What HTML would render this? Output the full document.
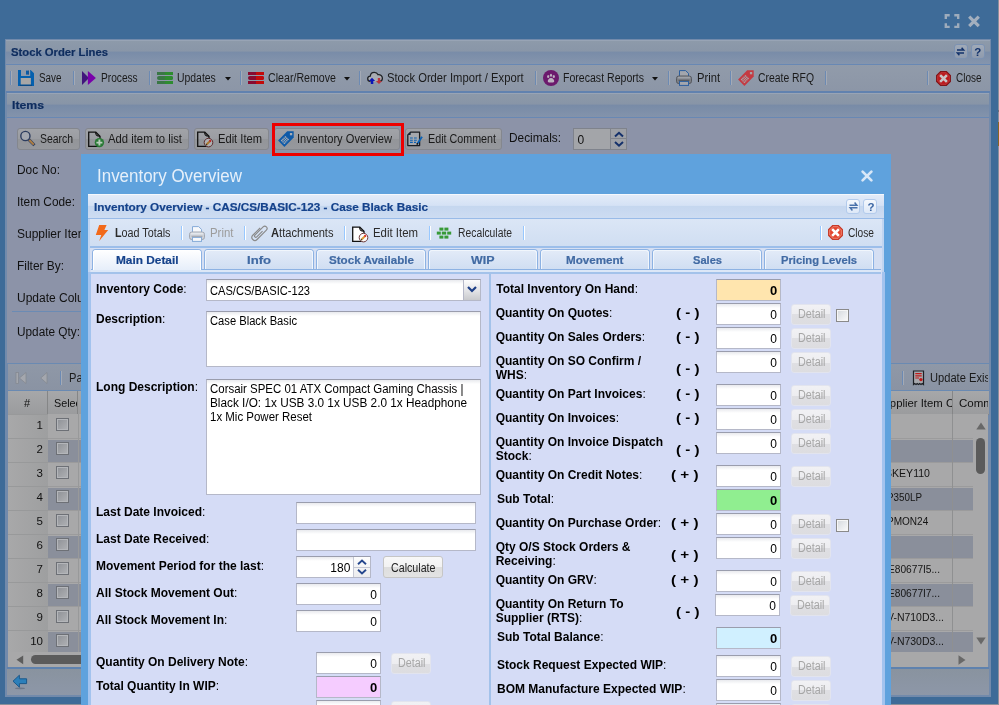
<!DOCTYPE html>
<html>
<head>
<meta charset="utf-8">
<title>Inventory Overview</title>
<style>
*{box-sizing:border-box;margin:0;padding:0}
html,body{width:999px;height:705px;overflow:hidden}
body{background:#3e6b98;font-family:"Liberation Sans",sans-serif;font-size:12px;color:#000;position:relative}
.a{position:absolute}
svg{position:absolute;overflow:visible}
.t{position:absolute;white-space:nowrap;line-height:14px}
.hv{-webkit-text-stroke:0.2px currentColor}
/* ---------- background (dimmed) window ---------- */
#win{left:5px;top:39px;width:986px;height:658px;background:#728aab}
#wtitle{left:1px;top:1px;width:984px;height:25px;background:linear-gradient(#8d9aaa,#8996a8 44%,#798ca8 48%,#8595ad);border-top:1px solid #98a4b5;border-bottom:1px solid #6888b4}
#wtb{left:1px;top:26px;width:984px;height:28px;background:linear-gradient(#919baa,#8c96a7);border-bottom:2px solid #6182af}
#items{left:2px;top:54px;width:982px;height:25px;background:linear-gradient(#8c99a9,#8895a7 44%,#788ba7 48%,#8393ab);border-top:1px solid #98a4b5;border-bottom:1px solid #6888b4}
#wbody{left:2px;top:79px;width:982px;height:246px;background:#8c93a8}
.sep{position:absolute;width:2px;height:14px;border-left:1px solid #6c8ab3;border-right:1px solid #a4aab5}
.dbtn{position:absolute;height:22px;border:1px solid #84878e;border-radius:3px;background:linear-gradient(#a1a3a8,#9b9da2 48%,#939599 52%,#96989d)}
/* grid */
.gh{position:absolute;top:391px;height:24px;background:linear-gradient(#a6a7a9,#9b9c9e);border-right:1px solid #858687;border-bottom:1px solid #858687}
.row{position:absolute;left:8px;width:965px;height:24px}
.row.o{background:#a6a7a9}
.row.e{background:#8a8f9c}
.num{position:absolute;left:0;top:0;width:40px;height:24px;background:linear-gradient(90deg,#a6a7a9,#9c9d9f);border-bottom:1px solid #98999b}
.cb{position:absolute;left:48px;top:5px;width:13px;height:13px;border:1px solid #6d7076;background:linear-gradient(135deg,#8e9196,#b0b2b5);box-shadow:inset 0 0 0 1px #b4b6ba}
.vl{position:absolute;top:0;width:1px;height:24px;background:#97989a}
/* ---------- modal ---------- */
#modal{left:81px;top:154px;width:810px;height:560px;background:#5fa2dd}
#panel{left:88px;top:194px;width:796px;height:520px;background:#d5dcf6;border:1px solid #a6c5ec;border-left:2px solid #c0d5f1;border-right:2px solid #c0d5f1}
#ptitle{left:88px;top:194px;border-top:1px solid #f4f8fd;width:796px;height:25px;background:linear-gradient(#e2ebf8,#d5e2f5 45%,#c5d7ef 50%,#cddcf2);border-bottom:1px solid #99bbe8}
#ptb{left:90px;top:219px;width:792px;height:29px;background:linear-gradient(#dbe6f6,#d0def2);border-bottom:2px solid #9cbeea}
#tabstrip{left:90px;top:248px;width:792px;height:26px;background:#d5dff3}
.msep{position:absolute;width:2px;height:14px;border-left:1px solid #98c8ff;border-right:1px solid #fff}
.tab{position:absolute;top:249px;height:20px;width:110px;border:1px solid #8db2e3;border-bottom:none;border-radius:4px 4px 0 0;background:linear-gradient(#e3ebf8,#d0def2)}
.tab.act{background:linear-gradient(#fff,#e6eefa);height:21px}
.inp{position:absolute;background:#fff;border:1px solid #b5b8c8;border-top-color:#9a9dad}
.btn{position:absolute;height:22px;border:1px solid #c6c6c6;border-radius:3px;background:linear-gradient(#f8f8f8,#f2f2f2 50%,#dedede 50%,#e3e3e3)}
.btn.dis{border-color:#e2e4ee;background:linear-gradient(#f1f1f4,#ededf0 50%,#dfdfe3 50%,#dddde0)}
.chk{position:absolute;width:13px;height:13px;border:1px solid #8a8a8a;background:linear-gradient(135deg,#d4d8dd,#fbfbfc);box-shadow:inset 0 0 0 1px #f6f6f6}
</style>
</head>
<body>
<div id="root" style="position:absolute;left:0;top:0;width:999px;height:705px;overflow:hidden;will-change:transform">
<svg style="left:944px;top:13px" width="40" height="16" viewBox="0 0 40 16">
<g fill="none" stroke="#9eacbc" stroke-width="2.4"><path d="M1.8 6V2.3h3.9M10.3 2.3h3.9V6M14.2 10.2v3.7h-3.9M5.7 13.9H1.8v-3.7"/></g>
<path d="M25.2 3.6l9.6 9.6M34.8 3.6l-9.6 9.6" stroke="#a3afbe" stroke-width="3.2" fill="none"/>
</svg>
<div id="win" class="a"><div id="wtitle" class="a"></div><div id="wtb" class="a"></div><div id="items" class="a"></div><div id="wbody" class="a"></div></div>
<div class="t hv" style="top:45.19px;font-size:11px;color:#0e2c5e;font-weight:bold;left:11px;transform:scaleX(1.0236);transform-origin:left;">Stock Order Lines</div>
<div class="t hv" style="top:98.19px;font-size:11px;color:#0e2c5e;font-weight:bold;left:12px;transform:scaleX(1.1130);transform-origin:left;">Items</div>
<div class="a" style="left:953.5px;top:44px;width:14px;height:14.5px;border:1px solid #7c92b2;border-radius:3px;background:linear-gradient(#a0aab8,#8f9bae)"></div>
<div class="a" style="left:970.5px;top:44px;width:14px;height:14.5px;border:1px solid #7c92b2;border-radius:3px;background:linear-gradient(#a0aab8,#8f9bae)"></div>
<svg style="left:955px;top:46px" width="11" height="11" viewBox="0 0 11 11"><g fill="none" stroke="#12326b" stroke-width="1.5"><path d="M2 4H8.6L6.6 1.8M9 7H2.4L4.4 9.2"/></g></svg>
<div class="t" style="top:44.52px;font-size:11.5px;color:#12326b;font-weight:bold;left:974.3px;">?</div>
<div class="sep" style="left:10px;top:71px"></div>
<div class="sep" style="left:73px;top:71px"></div>
<div class="sep" style="left:148.5px;top:71px"></div>
<div class="sep" style="left:239.5px;top:71px"></div>
<div class="sep" style="left:358.5px;top:71px"></div>
<div class="sep" style="left:534.5px;top:71px"></div>
<div class="sep" style="left:667.5px;top:71px"></div>
<div class="sep" style="left:729.5px;top:71px"></div>
<div class="sep" style="left:824.5px;top:71px"></div>
<div class="sep" style="left:926.5px;top:71px"></div>
<svg style="left:18px;top:70px" width="16" height="16" viewBox="0 0 16 16"><path d="M0 0H3V6H12.2V0H12.7L16 3.3V16H0Z" fill="#0560ae"/><rect x="8" y="0.6" width="2.6" height="4" fill="#0a5aa6"/><rect x="10" y="0.6" width="0.7" height="4" fill="#0a4a8a"/><rect x="2.7" y="8" width="10.2" height="6.7" fill="#a9a7a6"/><rect x="2" y="14.7" width="12" height="1.3" fill="#0b4a86"/></svg>
<div class="t" style="top:71.24px;font-size:12px;color:#1a1a1a;left:38.5px;transform:scaleX(0.8224);transform-origin:left;">Save</div>
<svg style="left:81px;top:70px" width="16" height="16" viewBox="0 0 16 16"><path d="M1 1L8 8L1 15Z" fill="#41157c"/><path d="M6.9 1L14.9 8L6.9 15Z" fill="#7900aa"/></svg>
<div class="t" style="top:71.24px;font-size:12px;color:#1a1a1a;left:101px;transform:scaleX(0.8464);transform-origin:left;">Process</div>
<svg style="left:157px;top:70px" width="16" height="16" viewBox="0 0 16 16"><rect x="0" y="2" width="8" height="3" fill="#3a7745"/><rect x="8" y="2" width="8" height="3" fill="#2e8c30"/><rect x="0" y="6" width="16" height="4" rx="2" fill="#3a7745"/><path d="M8 6h6a2 2 0 0 1 0 4H8z" fill="#2e8c30"/><rect x="0" y="11" width="8" height="3" fill="#3a7745"/><rect x="8" y="11" width="8" height="3" fill="#2e8c30"/></svg>
<div class="t" style="top:71.24px;font-size:12px;color:#1a1a1a;left:177px;transform:scaleX(0.8679);transform-origin:left;">Updates</div>
<svg style="left:224.5px;top:77px" width="6" height="4" viewBox="0 0 6 4"><path d="M0 0H6L3 3.5Z" fill="#111"/></svg>
<svg style="left:248px;top:70px" width="16" height="16" viewBox="0 0 16 16"><rect x="0" y="2" width="8" height="3" fill="#870a30"/><rect x="8" y="2" width="8" height="3" fill="#c20a0a"/><rect x="0" y="6" width="16" height="4" rx="2" fill="#870a30"/><path d="M8 6h6a2 2 0 0 1 0 4H8z" fill="#c20a0a"/><rect x="0" y="11" width="8" height="3" fill="#870a30"/><rect x="8" y="11" width="8" height="3" fill="#c20a0a"/></svg>
<div class="t" style="top:71.24px;font-size:12px;color:#1a1a1a;left:268px;transform:scaleX(0.8865);transform-origin:left;">Clear/Remove</div>
<svg style="left:343.5px;top:77px" width="6" height="4" viewBox="0 0 6 4"><path d="M0 0H6L3 3.5Z" fill="#111"/></svg>
<svg style="left:367px;top:70px" width="16" height="16" viewBox="0 0 16 16"><path d="M3.6 11.5C1.6 11.3 0.7 10 0.7 8.7C0.7 7.2 1.9 6.1 3.3 6.1C3.5 3.9 5.2 2.3 7.3 2.3C9 2.3 10.4 3.2 11.1 4.7C13.5 4.4 15.4 6 15.4 8.3C15.4 10.1 14.2 11.3 12.6 11.5" fill="#a9acb2" stroke="#1f2226" stroke-width="1.3"/><path d="M5 7.8L8.1 11H6.3V14H3.8V11H1.9Z" fill="#0b14b8"/><path d="M12 14.1L8.9 11H10.8V8H13.2V11H15.1Z" fill="#b9353d"/></svg>
<div class="t" style="top:71.24px;font-size:12px;color:#1a1a1a;left:387px;transform:scaleX(0.9346);transform-origin:left;">Stock Order Import / Export</div>
<svg style="left:543px;top:70px" width="16" height="16" viewBox="0 0 16 16"><circle cx="8" cy="8" r="8" fill="#6c1a6d"/><g fill="#bdb2c0"><ellipse cx="5.2" cy="6.4" rx="1.1" ry="1.5"/><ellipse cx="8" cy="5.2" rx="1.1" ry="1.5"/><ellipse cx="10.8" cy="6.4" rx="1.1" ry="1.5"/><path d="M8 8C10 8 11.4 10 11.2 11.4C11 12.6 9.6 12.4 8 12.4C6.4 12.4 5 12.6 4.8 11.4C4.6 10 6 8 8 8Z"/></g></svg>
<div class="t" style="top:71.24px;font-size:12px;color:#1a1a1a;left:563px;transform:scaleX(0.8800);transform-origin:left;">Forecast Reports</div>
<svg style="left:652px;top:77px" width="6" height="4" viewBox="0 0 6 4"><path d="M0 0H6L3 3.5Z" fill="#111"/></svg>
<svg style="left:676px;top:70px" width="16" height="16" viewBox="0 0 16 16"><path d="M3.5 7V0.6H9.6L12.5 3.4V7" fill="#a3a6ad" stroke="#2c5f9f" stroke-width="1"/><rect x="0.5" y="6" width="15" height="7.6" rx="2.4" fill="#7d8087" stroke="#55585e" stroke-width="1"/><rect x="1.6" y="6.8" width="12.8" height="1.8" rx="0.9" fill="#9ea1a8"/><rect x="3.5" y="11.4" width="9" height="4" fill="#a3a6ad" stroke="#2c5f9f" stroke-width="1"/><rect x="2.6" y="9.8" width="10.8" height="1.1" fill="#55585e"/></svg>
<div class="t" style="top:71.24px;font-size:12px;color:#1a1a1a;left:696.5px;transform:scaleX(0.9316);transform-origin:left;">Print</div>
<svg style="left:738px;top:70px" width="16" height="16" viewBox="0 0 16 16"><path d="M9.2 0.3L15.7 0.3L15.7 6.6L6.4 15.9L0.1 9.4Z" fill="#c43a42"/><rect x="11.9" y="2" width="2.3" height="2.3" fill="#a9a3a8"/><g transform="translate(6.9,9.1) rotate(-45)"><rect x="-3.3" y="-2.6" width="6.6" height="5.2" fill="#a9a3a8"/><g stroke="#c43a42" stroke-width="0.7"><path d="M-1.65 -2.6V2.6M0 -2.6V2.6M1.65 -2.6V2.6M-3.3 -0.9H3.3M-3.3 0.9H3.3"/></g></g></svg>
<div class="t" style="top:71.24px;font-size:12px;color:#1a1a1a;left:758px;transform:scaleX(0.8657);transform-origin:left;">Create RFQ</div>
<svg style="left:935.5px;top:70.5px" width="15" height="15" viewBox="0 0 15 15"><path d="M4.6 0.6H10.4L14.4 4.6V10.4L10.4 14.4H4.6L0.6 10.4V4.6Z" fill="#bb1b1f" stroke="#7e1519" stroke-width="1.1"/><path d="M5 1.7H10L13.3 5V10L10 13.3H5L1.7 10V5Z" fill="none" stroke="#c2383a" stroke-width="0.8"/><path d="M5 5L10 10M10 5L5 10" stroke="#c9c4c6" stroke-width="2.5" stroke-linecap="square"/></svg>
<div class="t" style="top:71.24px;font-size:12px;color:#1a1a1a;left:956px;transform:scaleX(0.8310);transform-origin:left;">Close</div>
<div class="dbtn" style="left:17px;top:128px;width:63px"></div>
<svg style="left:20px;top:130px" width="16" height="16" viewBox="0 0 16 16"><circle cx="5.4" cy="6" r="4.6" fill="#a4a8b0" stroke="#2c3c5e" stroke-width="1.4"/><path d="M8.9 9.6L14.4 15.2" stroke="#2c3c5e" stroke-width="3"/><path d="M9.3 10L13.8 14.6" stroke="#ad7d42" stroke-width="2"/></svg>
<div class="t" style="top:132.24px;font-size:12px;color:#1a1a1a;left:40px;transform:scaleX(0.8677);transform-origin:left;">Search</div>
<div class="dbtn" style="left:85px;top:128px;width:104px"></div>
<svg style="left:88px;top:130.5px" width="16" height="16" viewBox="0 0 16 16"><path d="M0.7 1.2H7.8L12 5.2V15.4H0.7Z" fill="none" stroke="#111" stroke-width="1.3"/><path d="M7.8 1.2C7.2 3.4 8.6 5.2 12 5.2" fill="none" stroke="#111" stroke-width="1.1"/><circle cx="11.4" cy="11.6" r="4.7" fill="#2a7a36"/><path d="M11.4 8.6V14.6M8.4 11.6H14.4" stroke="#b9cdbb" stroke-width="1.9"/></svg>
<div class="t" style="top:132.24px;font-size:12px;color:#1a1a1a;left:108px;transform:scaleX(0.9402);transform-origin:left;">Add item to list</div>
<div class="dbtn" style="left:194px;top:128px;width:75px"></div>
<svg style="left:197px;top:130.5px" width="16" height="16" viewBox="0 0 16 16"><path d="M0.7 1.2H7.8L12 5.2V15.4H0.7Z" fill="none" stroke="#111" stroke-width="1.3"/><path d="M7.8 1.2C7.2 3.4 8.6 5.2 12 5.2" fill="none" stroke="#111" stroke-width="1.1"/><circle cx="11.5" cy="11.6" r="4.3" fill="#aeb0b4" stroke="#5b2c2c" stroke-width="1"/><path d="M9.3 13.8L13 10.1" stroke="#a9772f" stroke-width="2"/><path d="M12.6 10.5L13.8 9.3" stroke="#c21d1d" stroke-width="2"/><path d="M9 14.1L9.8 13.3" stroke="#222" stroke-width="1.2"/></svg>
<div class="t" style="top:132.24px;font-size:12px;color:#1a1a1a;left:217.5px;transform:scaleX(0.9291);transform-origin:left;">Edit Item</div>
<div class="dbtn" style="left:274px;top:128px;width:126px"></div>
<svg style="left:278px;top:130.7px" width="16" height="16" viewBox="0 0 16 16"><path d="M9.2 0.3L15.7 0.3L15.7 6.6L6.4 15.9L0.1 9.4Z" fill="#0e5aa8"/><rect x="11.9" y="2" width="2.3" height="2.3" fill="#a9adb5"/><g transform="translate(6.9,9.1) rotate(-45)"><rect x="-3.3" y="-2.6" width="6.6" height="5.2" fill="#a9adb5"/><g stroke="#0e5aa8" stroke-width="0.7"><path d="M-1.65 -2.6V2.6M0 -2.6V2.6M1.65 -2.6V2.6M-3.3 -0.9H3.3M-3.3 0.9H3.3"/></g></g></svg>
<div class="t" style="top:132.24px;font-size:12px;color:#1a1a1a;left:297px;transform:scaleX(0.9250);transform-origin:left;">Inventory Overview</div>
<div class="dbtn" style="left:405px;top:128px;width:97px"></div>
<svg style="left:407px;top:131px" width="16" height="16" viewBox="0 0 16 16"><path d="M0.8 4L3.6 1.2H12.6V14.6H0.8Z" fill="#a6a8ad" stroke="#1a1d22" stroke-width="1.3" stroke-linejoin="round"/><path d="M0.8 4L3.6 1.2V4Z" fill="#14283e"/><g stroke="#0b62b5" stroke-width="1.1"><path d="M3 7H5.8M7 7H9.8M3 9.2H5.8M7 9.2H9.8M3 11.4H5.8M7 11.4H9"/></g><path d="M10.5 12.5L15 5.7" stroke="#0b62b5" stroke-width="1.9"/><circle cx="10.3" cy="12.9" r="0.9" fill="#0a0a0a"/></svg>
<div class="t" style="top:132.24px;font-size:12px;color:#1a1a1a;left:427.5px;transform:scaleX(0.8944);transform-origin:left;">Edit Comment</div>
<div class="t" style="top:130.84px;font-size:12px;color:#101010;left:508.5px;transform:scaleX(0.9870);transform-origin:left;">Decimals:</div>
<div class="a" style="left:573px;top:128px;width:38px;height:22px;background:#a3a5a9;border:1px solid #7f838c"></div>
<div class="t" style="top:132.84px;font-size:12px;color:#111;left:577.5px;">0</div>
<div class="a" style="left:611px;top:128px;width:16px;height:11px;background:#9da0a6;border:1px solid #7f838c;border-left:none"></div>
<div class="a" style="left:611px;top:139px;width:16px;height:11px;background:#9da0a6;border:1px solid #7f838c;border-left:none;border-top:none"></div>
<svg style="left:614px;top:131px" width="10" height="17" viewBox="0 0 10 17"><g fill="none" stroke="#13306b" stroke-width="2"><path d="M1 5.5L5 1.8L9 5.5M1 11L5 14.7L9 11"/></g></svg>
<div class="a" style="left:12px;top:311px;width:70px;height:1px;background:#6b8bb4"></div>
<div class="t" style="top:162.84px;font-size:12px;color:#111;left:17px;transform:scaleX(0.9917);transform-origin:left;">Doc No:</div>
<div class="t" style="top:194.84px;font-size:12px;color:#111;left:17px;transform:scaleX(0.9880);transform-origin:left;">Item Code:</div>
<div class="t" style="top:226.84px;font-size:12px;color:#111;left:17px;">Supplier Item</div>
<div class="t" style="top:258.84px;font-size:12px;color:#111;left:17px;transform:scaleX(0.9927);transform-origin:left;">Filter By:</div>
<div class="t" style="top:290.84px;font-size:12px;color:#111;left:17px;">Update Column</div>
<div class="t" style="top:324.84px;font-size:12px;color:#111;left:17px;transform:scaleX(0.9839);transform-origin:left;">Update Qty:</div>
<div class="a" style="left:7px;top:363px;width:982px;height:1px;background:#6a8ab2"></div>
<div class="a" style="left:8px;top:364px;width:981px;height:27px;background:linear-gradient(#8f98a7,#8a93a3);border-bottom:1px solid #6a8ab2"></div>
<svg style="left:15px;top:372px" width="34" height="12" viewBox="0 0 34 12"><g fill="#a4a7ae" stroke="#82868e" stroke-width="0.7"><rect x="1" y="0.5" width="2.4" height="11"/><path d="M11 0.5V11.5L4.4 6Z"/><path d="M32 0.5V11.5L25.7 6Z"/></g></svg>
<div class="sep" style="left:59.5px;top:371px"></div>
<div class="t" style="top:370.84px;font-size:12px;color:#1c1c1c;left:69px;transform:scaleX(0.9275);transform-origin:left;">Page</div>
<div class="sep" style="left:902px;top:371px"></div>
<svg style="left:911.5px;top:370px" width="13" height="16" viewBox="0 0 13 16"><path d="M1.5 1H11.5V14.5L10.2 13.6L9 14.5L7.7 13.6L6.5 14.5L5.2 13.6L4 14.5L2.7 13.6L1.5 14.5Z" fill="#a6a8ad" stroke="#1c1f24" stroke-width="1.2"/><g stroke="#c01818" stroke-width="1.2"><path d="M3.3 3.6H9.7M3.3 5.8H9.7M3.3 8H7"/></g><circle cx="8.9" cy="9.6" r="1.7" fill="#c01818"/></svg>
<div class="a" style="left:925px;top:366px;width:63px;height:22px;overflow:hidden"><div class="t" style="top:4.84px;font-size:12px;color:#1a1a1a;left:5px;transform:scaleX(0.9281);transform-origin:left;">Update Existing</div></div>
<div class="gh" style="left:8px;width:40px"></div>
<div class="gh" style="left:48px;width:30px"></div><div class="gh" style="left:78px;width:875px"></div><div class="gh" style="left:953px;width:36px;border-right:none"></div>
<div class="t" style="top:396.19px;font-size:11px;color:#111;left:24px;">#</div>
<div class="a" style="left:48px;top:392px;width:29px;height:22px;overflow:hidden"><div class="t" style="top:4.02px;font-size:11.5px;color:#111;left:6px;transform:scaleX(0.9384);transform-origin:left;">Select</div></div>
<div class="a" style="left:860px;top:392px;width:92px;height:22px;overflow:hidden"><div class="t" style="top:4.02px;font-size:11.5px;color:#111;left:16px;transform:scaleX(0.9852);transform-origin:left;">Supplier Item Code</div></div>
<div class="a" style="left:953px;top:392px;width:35px;height:22px;overflow:hidden"><div class="t" style="top:4.02px;font-size:11.5px;color:#111;left:6px;transform:scaleX(1.0028);transform-origin:left;">Comment</div></div>
<div class="a" style="left:8px;top:414px;width:965px;height:24px;background:#a8a8a9"></div>
<div class="a" style="left:8px;top:414px;width:40px;height:24px;background:linear-gradient(90deg,#a8a8a9,#9e9fa0);border-top:1px solid #98999a"></div>
<div class="a" style="left:78px;top:414px;width:1px;height:24px;background:#98999a"></div>
<div class="a" style="left:952px;top:414px;width:1px;height:24px;background:#8f9091"></div>
<div class="cb" style="left:56px;top:418px"></div>
<div class="t" style="top:417.92px;font-size:11.5px;color:#111;right:956px;">1</div>
<div class="a" style="left:8px;top:438px;width:965px;height:24px;background:#a8a8a9"></div>
<div class="a" style="left:48px;top:440px;width:925px;height:22px;background:#8a8f9b"></div>
<div class="a" style="left:8px;top:438px;width:965px;height:1px;background:#9b9b9c"></div>
<div class="a" style="left:8px;top:438px;width:40px;height:24px;background:linear-gradient(90deg,#a8a8a9,#9e9fa0);border-top:1px solid #98999a"></div>
<div class="a" style="left:78px;top:438px;width:1px;height:24px;background:#98999a"></div>
<div class="a" style="left:952px;top:438px;width:1px;height:24px;background:#8f9091"></div>
<div class="cb" style="left:56px;top:442px"></div>
<div class="t" style="top:441.92px;font-size:11.5px;color:#111;right:956px;">2</div>
<div class="a" style="left:8px;top:462px;width:965px;height:24px;background:#a8a8a9"></div>
<div class="a" style="left:8px;top:462px;width:965px;height:1px;background:#9b9b9c"></div>
<div class="a" style="left:8px;top:462px;width:40px;height:24px;background:linear-gradient(90deg,#a8a8a9,#9e9fa0);border-top:1px solid #98999a"></div>
<div class="a" style="left:78px;top:462px;width:1px;height:24px;background:#98999a"></div>
<div class="a" style="left:952px;top:462px;width:1px;height:24px;background:#8f9091"></div>
<div class="cb" style="left:56px;top:466px"></div>
<div class="t" style="top:465.92px;font-size:11.5px;color:#111;right:956px;">3</div>
<div class="t" style="top:465.89px;font-size:11px;color:#151515;left:885.2px;transform:scaleX(0.9597);transform-origin:left;">SKEY110</div>
<div class="a" style="left:8px;top:486px;width:965px;height:24px;background:#a8a8a9"></div>
<div class="a" style="left:48px;top:488px;width:925px;height:22px;background:#8a8f9b"></div>
<div class="a" style="left:8px;top:486px;width:965px;height:1px;background:#9b9b9c"></div>
<div class="a" style="left:8px;top:486px;width:40px;height:24px;background:linear-gradient(90deg,#a8a8a9,#9e9fa0);border-top:1px solid #98999a"></div>
<div class="a" style="left:78px;top:486px;width:1px;height:24px;background:#98999a"></div>
<div class="a" style="left:952px;top:486px;width:1px;height:24px;background:#8f9091"></div>
<div class="cb" style="left:56px;top:490px"></div>
<div class="t" style="top:489.92px;font-size:11.5px;color:#111;right:956px;">4</div>
<div class="t" style="top:489.89px;font-size:11px;color:#151515;left:887.2px;transform:scaleX(0.8939);transform-origin:left;">P350LP</div>
<div class="a" style="left:8px;top:510px;width:965px;height:24px;background:#a8a8a9"></div>
<div class="a" style="left:8px;top:510px;width:965px;height:1px;background:#9b9b9c"></div>
<div class="a" style="left:8px;top:510px;width:40px;height:24px;background:linear-gradient(90deg,#a8a8a9,#9e9fa0);border-top:1px solid #98999a"></div>
<div class="a" style="left:78px;top:510px;width:1px;height:24px;background:#98999a"></div>
<div class="a" style="left:952px;top:510px;width:1px;height:24px;background:#8f9091"></div>
<div class="cb" style="left:56px;top:514px"></div>
<div class="t" style="top:513.92px;font-size:11.5px;color:#111;right:956px;">5</div>
<div class="t" style="top:513.89px;font-size:11px;color:#151515;left:886.7px;transform:scaleX(0.9127);transform-origin:left;">PMON24</div>
<div class="a" style="left:8px;top:534px;width:965px;height:24px;background:#a8a8a9"></div>
<div class="a" style="left:48px;top:536px;width:925px;height:22px;background:#8a8f9b"></div>
<div class="a" style="left:8px;top:534px;width:965px;height:1px;background:#9b9b9c"></div>
<div class="a" style="left:8px;top:534px;width:40px;height:24px;background:linear-gradient(90deg,#a8a8a9,#9e9fa0);border-top:1px solid #98999a"></div>
<div class="a" style="left:78px;top:534px;width:1px;height:24px;background:#98999a"></div>
<div class="a" style="left:952px;top:534px;width:1px;height:24px;background:#8f9091"></div>
<div class="cb" style="left:56px;top:538px"></div>
<div class="t" style="top:537.92px;font-size:11.5px;color:#111;right:956px;">6</div>
<div class="a" style="left:8px;top:558px;width:965px;height:24px;background:#a8a8a9"></div>
<div class="a" style="left:8px;top:558px;width:965px;height:1px;background:#9b9b9c"></div>
<div class="a" style="left:8px;top:558px;width:40px;height:24px;background:linear-gradient(90deg,#a8a8a9,#9e9fa0);border-top:1px solid #98999a"></div>
<div class="a" style="left:78px;top:558px;width:1px;height:24px;background:#98999a"></div>
<div class="a" style="left:952px;top:558px;width:1px;height:24px;background:#8f9091"></div>
<div class="cb" style="left:56px;top:562px"></div>
<div class="t" style="top:561.92px;font-size:11.5px;color:#111;right:956px;">7</div>
<div class="t" style="top:561.89px;font-size:11px;color:#151515;left:888.3px;transform:scaleX(0.9239);transform-origin:left;">E80677I5...</div>
<div class="a" style="left:8px;top:582px;width:965px;height:24px;background:#a8a8a9"></div>
<div class="a" style="left:48px;top:584px;width:925px;height:22px;background:#8a8f9b"></div>
<div class="a" style="left:8px;top:582px;width:965px;height:1px;background:#9b9b9c"></div>
<div class="a" style="left:8px;top:582px;width:40px;height:24px;background:linear-gradient(90deg,#a8a8a9,#9e9fa0);border-top:1px solid #98999a"></div>
<div class="a" style="left:78px;top:582px;width:1px;height:24px;background:#98999a"></div>
<div class="a" style="left:952px;top:582px;width:1px;height:24px;background:#8f9091"></div>
<div class="cb" style="left:56px;top:586px"></div>
<div class="t" style="top:585.92px;font-size:11.5px;color:#111;right:956px;">8</div>
<div class="t" style="top:585.89px;font-size:11px;color:#151515;left:888.3px;transform:scaleX(0.9239);transform-origin:left;">E80677I7...</div>
<div class="a" style="left:8px;top:606px;width:965px;height:24px;background:#a8a8a9"></div>
<div class="a" style="left:8px;top:606px;width:965px;height:1px;background:#9b9b9c"></div>
<div class="a" style="left:8px;top:606px;width:40px;height:24px;background:linear-gradient(90deg,#a8a8a9,#9e9fa0);border-top:1px solid #98999a"></div>
<div class="a" style="left:78px;top:606px;width:1px;height:24px;background:#98999a"></div>
<div class="a" style="left:952px;top:606px;width:1px;height:24px;background:#8f9091"></div>
<div class="cb" style="left:56px;top:610px"></div>
<div class="t" style="top:609.92px;font-size:11.5px;color:#111;right:956px;">9</div>
<div class="t" style="top:609.89px;font-size:11px;color:#151515;left:887.3px;transform:scaleX(0.9512);transform-origin:left;">V-N710D3...</div>
<div class="a" style="left:8px;top:630px;width:965px;height:22px;background:#a8a8a9"></div>
<div class="a" style="left:48px;top:632px;width:925px;height:20px;background:#8a8f9b"></div>
<div class="a" style="left:8px;top:630px;width:965px;height:1px;background:#9b9b9c"></div>
<div class="a" style="left:8px;top:630px;width:40px;height:22px;background:linear-gradient(90deg,#a8a8a9,#9e9fa0);border-top:1px solid #98999a"></div>
<div class="a" style="left:78px;top:630px;width:1px;height:22px;background:#98999a"></div>
<div class="a" style="left:952px;top:630px;width:1px;height:22px;background:#8f9091"></div>
<div class="cb" style="left:56px;top:634px"></div>
<div class="t" style="top:633.92px;font-size:11.5px;color:#111;right:956px;">10</div>
<div class="t" style="top:633.89px;font-size:11px;color:#151515;left:887.3px;transform:scaleX(0.9512);transform-origin:left;">V-N730D3...</div>
<div class="a" style="left:973px;top:414px;width:15px;height:238px;background:#a8a8a9"></div>
<svg style="left:976px;top:422px" width="10" height="8" viewBox="0 0 10 8"><path d="M0.3 7.5L5 0.5L9.7 7.5Z" fill="#686868"/></svg>
<div class="a" style="left:976px;top:438px;width:9px;height:36px;border-radius:4.5px;background:#5b5b5b"></div>
<svg style="left:976px;top:637px" width="10" height="8" viewBox="0 0 10 8"><path d="M0.3 0.5L5 7.5L9.7 0.5Z" fill="#686868"/></svg>
<div class="a" style="left:8px;top:652px;width:980px;height:15px;background:#a8a8a9"></div>
<svg style="left:16px;top:655px" width="8" height="10" viewBox="0 0 8 10"><path d="M7.2 0.5L0.5 4.8L7.2 9.2Z" fill="#5c5c5c"/></svg>
<div class="a" style="left:31px;top:655px;width:600px;height:9px;border-radius:4.5px;background:#5b5b5b"></div>
<svg style="left:958px;top:655px" width="8" height="10" viewBox="0 0 8 10"><path d="M0.5 0.3L7.5 5L0.5 9.7Z" fill="#686868"/></svg>
<div class="a" style="left:7px;top:667px;width:982px;height:2px;background:#5f82ae"></div>
<div class="a" style="left:7px;top:669px;width:982px;height:26px;background:linear-gradient(#89939f,#8d97a8)"></div>
<svg style="left:12px;top:674px" width="16" height="16" viewBox="0 0 16 16"><ellipse cx="8" cy="14.3" rx="5" ry="0.9" fill="#6d7889"/><path d="M7.4 1.2L1 7.2L7.4 13.2V9.6H14.6V4.8H7.4Z" fill="#2b7fba" stroke="#1c598b" stroke-width="1"/></svg>
<div class="a" style="left:0;top:703.6px;width:999px;height:2px;background:#8b909a"></div>
<div class="a" style="left:997.6px;top:0;width:2px;height:705px;background:#8b909a"></div>
<div class="a" style="left:997.8px;top:122px;width:2px;height:24px;background:#8a6522"></div><div class="a" style="left:997.8px;top:110px;width:2px;height:2px;background:#6d7078"></div>
<div id="modal" class="a"></div>
<div class="t" style="top:168.76px;font-size:18px;color:#e6f0fa;left:97px;transform:scaleX(0.9412);transform-origin:left;">Inventory Overview</div>
<svg style="left:861px;top:170px" width="12" height="12" viewBox="0 0 12 12"><path d="M1.6 1.6l8.8 8.8M10.4 1.6l-8.8 8.8" stroke="#d8e7f7" stroke-width="2.7" stroke-linecap="round" fill="none"/></svg>
<div id="panel" class="a"></div><div id="ptitle" class="a"></div><div id="ptb" class="a"></div><div id="tabstrip" class="a"></div>
<div class="t hv" style="top:199.69px;font-size:11px;color:#15428b;font-weight:bold;left:94px;transform:scaleX(1.0670);transform-origin:left;">Inventory Overview - CAS/CS/BASIC-123 - Case Black Basic</div>
<div class="a" style="left:846.3px;top:199px;width:14px;height:14.5px;border:1px solid #b3cbec;border-radius:3px;background:linear-gradient(#f4f8fd,#dde8f7)"></div>
<div class="a" style="left:863.3px;top:199px;width:14px;height:14.5px;border:1px solid #b3cbec;border-radius:3px;background:linear-gradient(#f4f8fd,#dde8f7)"></div>
<svg style="left:848px;top:201px" width="11" height="11" viewBox="0 0 11 11"><g fill="none" stroke="#4a72ab" stroke-width="1.5"><path d="M1.5 4.2H8.8L6.6 1.6M9.5 6.8H2.2L4.4 9.4"/></g></svg>
<div class="t" style="top:200.02px;font-size:11.5px;color:#3c66a4;font-weight:bold;left:867.5px;">?</div>
<div class="msep" style="left:181px;top:226px"></div>
<div class="msep" style="left:243.5px;top:226px"></div>
<div class="msep" style="left:344px;top:226px"></div>
<div class="msep" style="left:428.5px;top:226px"></div>
<div class="msep" style="left:523px;top:226px"></div>
<div class="msep" style="left:819.5px;top:226px"></div>
<svg style="left:95px;top:225px" width="14" height="16" viewBox="0 0 14 16"><path d="M4.2 0L11.6 0L9.4 4.9L13.2 4.9L4.2 16L6.3 10.1L0.8 10.1Z" fill="#f26a1b"/></svg>
<div class="t" style="top:225.84px;font-size:12px;color:#2b2b2b;left:114.5px;transform:scaleX(0.8974);transform-origin:left;"><b>L</b>oad Totals</div>
<svg style="left:189px;top:226px" width="16" height="16" viewBox="0 0 16 16"><path d="M3.5 7V0.6H9.6L12.5 3.4V7" fill="#f6f8fb" stroke="#86abd8" stroke-width="1"/><rect x="0.5" y="6" width="15" height="7.6" rx="2.4" fill="#cdd1d8" stroke="#a2a7b1" stroke-width="1"/><rect x="1.6" y="6.8" width="12.8" height="1.8" rx="0.9" fill="#e4e7ec"/><rect x="3.5" y="11.4" width="9" height="4" fill="#f6f8fb" stroke="#86abd8" stroke-width="1"/><rect x="2.6" y="9.8" width="10.8" height="1.1" fill="#a2a7b1"/></svg>
<div class="t" style="top:225.84px;font-size:12px;color:#9c9c9c;left:209.5px;transform:scaleX(0.9519);transform-origin:left;">Print</div>
<svg style="left:251px;top:225px" width="16" height="16" viewBox="0 0 16 16"><g transform="translate(8.3,8) rotate(45)"><path d="M-3 -4.2V6.2A3 3 0 0 0 3 6.2V-7A2.3 2.3 0 0 0 -1.6 -7V4.6A1 1 0 0 0 1 4.6V-3.6" fill="none" stroke="#8a8a8a" stroke-width="1.15"/></g></svg>
<div class="t" style="top:225.84px;font-size:12px;color:#2b2b2b;left:271px;transform:scaleX(0.9276);transform-origin:left;"><b>A</b>ttachments</div>
<svg style="left:352px;top:226px" width="16" height="16" viewBox="0 0 16 16"><path d="M0.7 1.2H7.8L12 5.2V15.4H0.7Z" fill="#fff" stroke="#111" stroke-width="1.3"/><path d="M7.8 1.2C7.2 3.4 8.6 5.2 12 5.2" fill="none" stroke="#111" stroke-width="1.1"/><circle cx="11.5" cy="11.6" r="4.3" fill="#fdfdfd" stroke="#6e3a3a" stroke-width="1"/><path d="M9.3 13.8L13 10.1" stroke="#d79a3a" stroke-width="2"/><path d="M12.6 10.5L13.8 9.3" stroke="#e32121" stroke-width="2"/><path d="M9 14.1L9.8 13.3" stroke="#222" stroke-width="1.2"/></svg>
<div class="t" style="top:225.84px;font-size:12px;color:#2b2b2b;left:372.5px;transform:scaleX(0.9502);transform-origin:left;">Edit Item</div>
<svg style="left:436px;top:225px" width="16" height="16" viewBox="0 0 16 16"><g fill="#379a37"><rect x="3.4" y="2.6" width="4" height="3"/><rect x="8.4" y="2.6" width="4" height="3"/><rect x="0.8" y="6.6" width="4" height="3"/><rect x="5.8" y="6.6" width="4.4" height="3"/><rect x="11.2" y="6.6" width="4" height="3"/><rect x="3.4" y="10.6" width="4" height="3"/><rect x="8.4" y="10.6" width="4" height="3"/></g></svg>
<div class="t" style="top:225.84px;font-size:12px;color:#2b2b2b;left:457.5px;transform:scaleX(0.8612);transform-origin:left;">Recalculate</div>
<svg style="left:828px;top:225px" width="15" height="15" viewBox="0 0 15 15"><path d="M4.6 0.6H10.4L14.4 4.6V10.4L10.4 14.4H4.6L0.6 10.4V4.6Z" fill="#e3462f" stroke="#c53a29" stroke-width="1.1"/><path d="M5 1.7H10L13.3 5V10L10 13.3H5L1.7 10V5Z" fill="none" stroke="#f08f7d" stroke-width="0.8"/><path d="M5 5L10 10M10 5L5 10" stroke="#ffffff" stroke-width="2.5" stroke-linecap="square"/></svg>
<div class="t" style="top:225.84px;font-size:12px;color:#2b2b2b;left:848px;transform:scaleX(0.8473);transform-origin:left;">Close</div>
<div class="a" style="left:91px;top:269px;width:790px;height:3px;background:#dce7f7;border-top:1px solid #8db2e3"></div>
<div class="a" style="left:91px;top:272px;width:790px;height:2px;background:#a3c2ea"></div>
<div class="tab act" style="left:92px;width:109.5px"><div class="a" style="left:0;top:0;right:0;bottom:0;border:1px solid #fff;border-bottom:none;border-radius:3px 3px 0 0"></div></div>
<div class="t hv" style="top:253.02px;font-size:11.5px;color:#15428b;font-weight:bold;left:115.75px;transform:scaleX(1.0293);transform-origin:left;">Main Detail</div>
<div class="tab" style="left:204px;width:109.5px"><div class="a" style="left:0;top:0;right:0;bottom:0;border:1px solid #f1f6fc;border-bottom:none;border-radius:3px 3px 0 0"></div></div>
<div class="t hv" style="top:253.02px;font-size:11.5px;color:#416aa3;font-weight:bold;left:247px;transform:scaleX(1.1386);transform-origin:left;">Info</div>
<div class="tab" style="left:316px;width:109.5px"><div class="a" style="left:0;top:0;right:0;bottom:0;border:1px solid #f1f6fc;border-bottom:none;border-radius:3px 3px 0 0"></div></div>
<div class="t hv" style="top:253.02px;font-size:11.5px;color:#416aa3;font-weight:bold;left:328.5px;transform:scaleX(1.0100);transform-origin:left;">Stock Available</div>
<div class="tab" style="left:428px;width:109.5px"><div class="a" style="left:0;top:0;right:0;bottom:0;border:1px solid #f1f6fc;border-bottom:none;border-radius:3px 3px 0 0"></div></div>
<div class="t hv" style="top:253.02px;font-size:11.5px;color:#416aa3;font-weight:bold;left:471.25px;transform:scaleX(1.0812);transform-origin:left;">WIP</div>
<div class="tab" style="left:540px;width:109.5px"><div class="a" style="left:0;top:0;right:0;bottom:0;border:1px solid #f1f6fc;border-bottom:none;border-radius:3px 3px 0 0"></div></div>
<div class="t hv" style="top:253.02px;font-size:11.5px;color:#416aa3;font-weight:bold;left:566.25px;transform:scaleX(1.0110);transform-origin:left;">Movement</div>
<div class="tab" style="left:652px;width:109.5px"><div class="a" style="left:0;top:0;right:0;bottom:0;border:1px solid #f1f6fc;border-bottom:none;border-radius:3px 3px 0 0"></div></div>
<div class="t hv" style="top:253.02px;font-size:11.5px;color:#416aa3;font-weight:bold;left:692.5px;transform:scaleX(0.9647);transform-origin:left;">Sales</div>
<div class="tab" style="left:764px;width:109.5px"><div class="a" style="left:0;top:0;right:0;bottom:0;border:1px solid #f1f6fc;border-bottom:none;border-radius:3px 3px 0 0"></div></div>
<div class="t hv" style="top:253.02px;font-size:11.5px;color:#416aa3;font-weight:bold;left:781px;transform:scaleX(0.9746);transform-origin:left;">Pricing Levels</div>
<div class="a" style="left:88px;top:272px;width:3px;height:440px;background:#a3c3ee"></div><div class="a" style="left:881.5px;top:272px;width:3px;height:440px;background:#a3c3ee"></div>
<div class="a" style="left:489px;top:274px;width:2px;height:440px;background:#a3c2ea"></div>
<div class="t" style="top:281.84px;font-size:12px;color:#000;font-weight:bold;left:96px;">Inventory Code<span style="font-weight:normal">:</span></div>
<div class="inp" style="left:206px;top:279px;width:275px;height:22px;background:linear-gradient(#e9eaee,#fff 4px)"></div>
<div class="a" style="left:463px;top:280px;width:17px;height:20px;background:linear-gradient(#fdfdfd,#e2e3e6 55%,#c9cacd);border-left:1px solid #b5b8c8"></div>
<svg style="left:467px;top:286px" width="10" height="7" viewBox="0 0 10 7"><path d="M1 1L5 5L9 1" fill="none" stroke="#1d3f86" stroke-width="2.2"/></svg>
<div class="t" style="top:283.54px;font-size:12px;color:#000;left:209.8px;transform:scaleX(0.9255);transform-origin:left;">CAS/CS/BASIC-123</div>
<div class="t" style="top:311.84px;font-size:12px;color:#000;font-weight:bold;left:96px;">Description<span style="font-weight:normal">:</span></div>
<div class="inp" style="left:206px;top:311px;width:275px;height:56px;background:linear-gradient(#e9eaee,#fff 4px)"></div>
<div class="t" style="top:313.54px;font-size:12px;color:#000;left:209.8px;transform:scaleX(0.9317);transform-origin:left;">Case Black Basic</div>
<div class="t" style="top:379.84px;font-size:12px;color:#000;font-weight:bold;left:96px;">Long Description<span style="font-weight:normal">:</span></div>
<div class="inp" style="left:206px;top:379px;width:275px;height:116px;background:linear-gradient(#e9eaee,#fff 4px)"></div>
<div class="t" style="top:381.54px;font-size:12px;color:#000;left:209.8px;transform:scaleX(0.9542);transform-origin:left;">Corsair SPEC 01 ATX Compact Gaming Chassis |</div>
<div class="t" style="top:395.54px;font-size:12px;color:#000;left:209.8px;transform:scaleX(0.9829);transform-origin:left;">Black I/O: 1x USB 3.0 1x USB 2.0 1x Headphone</div>
<div class="t" style="top:409.54px;font-size:12px;color:#000;left:209.8px;transform:scaleX(0.9559);transform-origin:left;">1x Mic Power Reset</div>
<div class="t" style="top:504.84px;font-size:12px;color:#000;font-weight:bold;left:96px;">Last Date Invoiced<span style="font-weight:normal">:</span></div>
<div class="inp" style="left:296px;top:502px;width:180px;height:22px;background:linear-gradient(#e9eaee,#fff 4px)"></div>
<div class="t" style="top:531.84px;font-size:12px;color:#000;font-weight:bold;left:96px;">Last Date Received<span style="font-weight:normal">:</span></div>
<div class="inp" style="left:296px;top:529px;width:180px;height:22px;background:linear-gradient(#e9eaee,#fff 4px)"></div>
<div class="t" style="top:558.84px;font-size:12px;color:#000;font-weight:bold;left:96px;">Movement Period for the last<span style="font-weight:normal">:</span></div>
<div class="inp" style="left:296px;top:556px;width:75px;height:22px;background:linear-gradient(#e9eaee,#fff 4px)"></div>
<div class="a" style="left:353px;top:557px;width:17px;height:20px;background:linear-gradient(#fdfdfd,#ececee);border-left:1px solid #c5c8d4"></div>
<div class="a" style="left:354px;top:566.5px;width:16px;height:1px;background:#c5c8d4"></div>
<svg style="left:357px;top:559px" width="10" height="16" viewBox="0 0 10 16"><g fill="none" stroke="#25478d" stroke-width="1.9"><path d="M1 5.2L5 1.6L9 5.2M1 10.8L5 14.4L9 10.8"/></g></svg>
<div class="t" style="top:560.94px;font-size:12px;color:#000;right:648.7px;">180</div>
<div class="btn" style="left:383px;top:556px;width:60px;height:22px"></div>
<div class="t" style="top:560.64px;font-size:12px;color:#222;left:391.25px;transform:scaleX(0.8894);transform-origin:left;">Calculate</div>
<div class="t" style="top:585.84px;font-size:12px;color:#000;font-weight:bold;left:96px;">All Stock Movement Out<span style="font-weight:normal">:</span></div>
<div class="inp" style="left:296px;top:583px;width:85px;height:22px;background:linear-gradient(#e9eaee,#fff 4px)"></div>
<div class="t" style="top:588.04px;font-size:12px;color:#000;right:622px;">0</div>
<div class="t" style="top:612.84px;font-size:12px;color:#000;font-weight:bold;left:96px;">All Stock Movement In<span style="font-weight:normal">:</span></div>
<div class="inp" style="left:296px;top:610px;width:85px;height:22px;background:linear-gradient(#e9eaee,#fff 4px)"></div>
<div class="t" style="top:615.04px;font-size:12px;color:#000;right:622px;">0</div>
<div class="t" style="top:654.84px;font-size:12px;color:#000;font-weight:bold;left:96px;">Quantity On Delivery Note<span style="font-weight:normal">:</span></div>
<div class="inp" style="left:316px;top:652px;width:65px;height:22px;background:linear-gradient(#e9eaee,#fff 4px)"></div>
<div class="t" style="top:656.84px;font-size:12px;color:#000;right:622px;">0</div>
<div class="btn dis" style="left:391px;top:652.5px;width:40px;height:21px"></div>
<div class="t" style="top:655.94px;font-size:12px;color:#a6a6a6;left:398.25px;transform:scaleX(0.8961);transform-origin:left;">Detail</div>
<div class="t" style="top:678.84px;font-size:12px;color:#000;font-weight:bold;left:96px;">Total Quantity In WIP<span style="font-weight:normal">:</span></div>
<div class="inp" style="left:316px;top:676px;width:65px;height:22px;background:linear-gradient(#f5ccff,#f5ccff 4px)"></div>
<div class="t" style="top:680.50px;font-size:13px;color:#000;font-weight:bold;right:621.7px;">0</div>
<div class="inp" style="left:316px;top:700px;width:65px;height:22px;background:linear-gradient(#e9eaee,#fff 4px)"></div>
<div class="btn dis" style="left:391px;top:700.5px;width:40px;height:21px"></div>
<div class="t" style="top:703.94px;font-size:12px;color:#a6a6a6;left:412px;"></div>
<div class="t" style="top:281.84px;font-size:12px;color:#000;font-weight:bold;left:496.2px;">Total Inventory On Hand<span style="font-weight:normal">:</span></div>
<div class="inp" style="left:716px;top:279px;width:65px;height:22px;background:linear-gradient(#ffe5ae,#ffe5ae 4px)"></div>
<div class="t" style="top:283.50px;font-size:13px;color:#000;font-weight:bold;right:221.7px;">0</div>
<div class="t" style="top:305.84px;font-size:12px;color:#000;font-weight:bold;left:495.7px;">Quantity On Quotes<span style="font-weight:normal">:</span></div>
<div class="t" style="top:305.80px;font-size:13px;color:#000;font-weight:bold;left:676px;transform:scaleX(1.1623);transform-origin:left;">( - )</div>
<div class="inp" style="left:716px;top:303px;width:65px;height:22px;background:linear-gradient(#e9eaee,#fff 4px)"></div>
<div class="t" style="top:307.84px;font-size:12px;color:#000;right:222px;">0</div>
<div class="btn dis" style="left:791px;top:303.5px;width:39.5px;height:21px"></div>
<div class="t" style="top:306.94px;font-size:12px;color:#a6a6a6;left:798px;transform:scaleX(0.8961);transform-origin:left;">Detail</div>
<div class="chk" style="left:836px;top:309px"></div>
<div class="t" style="top:329.84px;font-size:12px;color:#000;font-weight:bold;left:495.7px;">Quantity On Sales Orders<span style="font-weight:normal">:</span></div>
<div class="t" style="top:329.80px;font-size:13px;color:#000;font-weight:bold;left:676px;transform:scaleX(1.1623);transform-origin:left;">( - )</div>
<div class="inp" style="left:716px;top:327px;width:65px;height:22px;background:linear-gradient(#e9eaee,#fff 4px)"></div>
<div class="t" style="top:331.84px;font-size:12px;color:#000;right:222px;">0</div>
<div class="btn dis" style="left:791px;top:327.5px;width:39.5px;height:21px"></div>
<div class="t" style="top:330.94px;font-size:12px;color:#a6a6a6;left:798px;transform:scaleX(0.8961);transform-origin:left;">Detail</div>
<div class="t" style="top:353.84px;font-size:12px;color:#000;font-weight:bold;left:495.7px;">Quantity On SO Confirm /</div>
<div class="t" style="top:367.84px;font-size:12px;color:#000;font-weight:bold;left:495.7px;">WHS<span style="font-weight:normal">:</span></div>
<div class="t" style="top:361.50px;font-size:13px;color:#000;font-weight:bold;left:676px;transform:scaleX(1.1623);transform-origin:left;">( - )</div>
<div class="inp" style="left:716px;top:351px;width:65px;height:22px;background:linear-gradient(#e9eaee,#fff 4px)"></div>
<div class="t" style="top:355.84px;font-size:12px;color:#000;right:222px;">0</div>
<div class="btn dis" style="left:791px;top:351.5px;width:39.5px;height:21px"></div>
<div class="t" style="top:354.94px;font-size:12px;color:#a6a6a6;left:798px;transform:scaleX(0.8961);transform-origin:left;">Detail</div>
<div class="t" style="top:386.84px;font-size:12px;color:#000;font-weight:bold;left:495.7px;">Quantity On Part Invoices<span style="font-weight:normal">:</span></div>
<div class="t" style="top:386.80px;font-size:13px;color:#000;font-weight:bold;left:676px;transform:scaleX(1.1623);transform-origin:left;">( - )</div>
<div class="inp" style="left:716px;top:384px;width:65px;height:22px;background:linear-gradient(#e9eaee,#fff 4px)"></div>
<div class="t" style="top:388.84px;font-size:12px;color:#000;right:222px;">0</div>
<div class="btn dis" style="left:791px;top:384.5px;width:39.5px;height:21px"></div>
<div class="t" style="top:387.94px;font-size:12px;color:#a6a6a6;left:798px;transform:scaleX(0.8961);transform-origin:left;">Detail</div>
<div class="t" style="top:410.84px;font-size:12px;color:#000;font-weight:bold;left:495.7px;">Quantity On Invoices<span style="font-weight:normal">:</span></div>
<div class="t" style="top:410.80px;font-size:13px;color:#000;font-weight:bold;left:676px;transform:scaleX(1.1623);transform-origin:left;">( - )</div>
<div class="inp" style="left:716px;top:408px;width:65px;height:22px;background:linear-gradient(#e9eaee,#fff 4px)"></div>
<div class="t" style="top:412.84px;font-size:12px;color:#000;right:222px;">0</div>
<div class="btn dis" style="left:791px;top:408.5px;width:39.5px;height:21px"></div>
<div class="t" style="top:411.94px;font-size:12px;color:#a6a6a6;left:798px;transform:scaleX(0.8961);transform-origin:left;">Detail</div>
<div class="t" style="top:434.84px;font-size:12px;color:#000;font-weight:bold;left:495.7px;">Quantity On Invoice Dispatch</div>
<div class="t" style="top:448.84px;font-size:12px;color:#000;font-weight:bold;left:495.7px;">Stock<span style="font-weight:normal">:</span></div>
<div class="t" style="top:442.50px;font-size:13px;color:#000;font-weight:bold;left:676px;transform:scaleX(1.1623);transform-origin:left;">( - )</div>
<div class="inp" style="left:716px;top:432px;width:65px;height:22px;background:linear-gradient(#e9eaee,#fff 4px)"></div>
<div class="t" style="top:436.84px;font-size:12px;color:#000;right:222px;">0</div>
<div class="btn dis" style="left:791px;top:432.5px;width:39.5px;height:21px"></div>
<div class="t" style="top:435.94px;font-size:12px;color:#a6a6a6;left:798px;transform:scaleX(0.8961);transform-origin:left;">Detail</div>
<div class="t" style="top:467.84px;font-size:12px;color:#000;font-weight:bold;left:495.7px;">Quantity On Credit Notes<span style="font-weight:normal">:</span></div>
<div class="t" style="top:467.80px;font-size:13px;color:#000;font-weight:bold;left:671px;transform:scaleX(1.1710);transform-origin:left;">( + )</div>
<div class="inp" style="left:716px;top:465px;width:65px;height:22px;background:linear-gradient(#e9eaee,#fff 4px)"></div>
<div class="t" style="top:469.84px;font-size:12px;color:#000;right:222px;">0</div>
<div class="btn dis" style="left:791px;top:465.5px;width:39.5px;height:21px"></div>
<div class="t" style="top:468.94px;font-size:12px;color:#a6a6a6;left:798px;transform:scaleX(0.8961);transform-origin:left;">Detail</div>
<div class="t" style="top:491.84px;font-size:12px;color:#000;font-weight:bold;left:497px;">Sub Total<span style="font-weight:normal">:</span></div>
<div class="inp" style="left:716px;top:489px;width:65px;height:22px;background:linear-gradient(#90ee90,#90ee90 4px)"></div>
<div class="t" style="top:493.50px;font-size:13px;color:#000;font-weight:bold;right:221.7px;">0</div>
<div class="t" style="top:515.84px;font-size:12px;color:#000;font-weight:bold;left:495.7px;">Quantity On Purchase Order<span style="font-weight:normal">:</span></div>
<div class="t" style="top:515.80px;font-size:13px;color:#000;font-weight:bold;left:671px;transform:scaleX(1.1710);transform-origin:left;">( + )</div>
<div class="inp" style="left:716px;top:513px;width:65px;height:22px;background:linear-gradient(#e9eaee,#fff 4px)"></div>
<div class="t" style="top:517.84px;font-size:12px;color:#000;right:222px;">0</div>
<div class="btn dis" style="left:791px;top:513.5px;width:39.5px;height:21px"></div>
<div class="t" style="top:516.94px;font-size:12px;color:#a6a6a6;left:798px;transform:scaleX(0.8961);transform-origin:left;">Detail</div>
<div class="chk" style="left:836px;top:519px"></div>
<div class="t" style="top:539.84px;font-size:12px;color:#000;font-weight:bold;left:495.7px;">Qty O/S Stock Orders &amp;</div>
<div class="t" style="top:553.84px;font-size:12px;color:#000;font-weight:bold;left:495.7px;">Receiving<span style="font-weight:normal">:</span></div>
<div class="t" style="top:547.50px;font-size:13px;color:#000;font-weight:bold;left:671px;transform:scaleX(1.1710);transform-origin:left;">( + )</div>
<div class="inp" style="left:716px;top:537px;width:65px;height:22px;background:linear-gradient(#e9eaee,#fff 4px)"></div>
<div class="t" style="top:541.84px;font-size:12px;color:#000;right:222px;">0</div>
<div class="btn dis" style="left:791px;top:537.5px;width:39.5px;height:21px"></div>
<div class="t" style="top:540.94px;font-size:12px;color:#a6a6a6;left:798px;transform:scaleX(0.8961);transform-origin:left;">Detail</div>
<div class="t" style="top:572.84px;font-size:12px;color:#000;font-weight:bold;left:495.7px;">Quantity On GRV<span style="font-weight:normal">:</span></div>
<div class="t" style="top:572.80px;font-size:13px;color:#000;font-weight:bold;left:671px;transform:scaleX(1.1710);transform-origin:left;">( + )</div>
<div class="inp" style="left:716px;top:570px;width:65px;height:22px;background:linear-gradient(#e9eaee,#fff 4px)"></div>
<div class="t" style="top:574.84px;font-size:12px;color:#000;right:222px;">0</div>
<div class="btn dis" style="left:791px;top:570.5px;width:39.5px;height:21px"></div>
<div class="t" style="top:573.94px;font-size:12px;color:#a6a6a6;left:798px;transform:scaleX(0.8961);transform-origin:left;">Detail</div>
<div class="t" style="top:596.84px;font-size:12px;color:#000;font-weight:bold;left:495.7px;">Quantity On Return To</div>
<div class="t" style="top:610.84px;font-size:12px;color:#000;font-weight:bold;left:495.7px;">Supplier (RTS)<span style="font-weight:normal">:</span></div>
<div class="t" style="top:604.50px;font-size:13px;color:#000;font-weight:bold;left:676px;transform:scaleX(1.1623);transform-origin:left;">( - )</div>
<div class="inp" style="left:715px;top:594px;width:65px;height:22px;background:linear-gradient(#e9eaee,#fff 4px)"></div>
<div class="t" style="top:598.84px;font-size:12px;color:#000;right:223px;">0</div>
<div class="btn dis" style="left:790px;top:594.5px;width:39.5px;height:21px"></div>
<div class="t" style="top:597.94px;font-size:12px;color:#a6a6a6;left:797px;transform:scaleX(0.8961);transform-origin:left;">Detail</div>
<div class="t" style="top:629.84px;font-size:12px;color:#000;font-weight:bold;left:497px;">Sub Total Balance<span style="font-weight:normal">:</span></div>
<div class="inp" style="left:716px;top:627px;width:65px;height:22px;background:linear-gradient(#d0f0ff,#d0f0ff 4px)"></div>
<div class="t" style="top:631.50px;font-size:13px;color:#000;font-weight:bold;right:221.7px;">0</div>
<div class="t" style="top:657.84px;font-size:12px;color:#000;font-weight:bold;left:497px;">Stock Request Expected WIP<span style="font-weight:normal">:</span></div>
<div class="inp" style="left:716px;top:655px;width:65px;height:22px;background:linear-gradient(#e9eaee,#fff 4px)"></div>
<div class="t" style="top:659.84px;font-size:12px;color:#000;right:222px;">0</div>
<div class="btn dis" style="left:791px;top:655.5px;width:39.5px;height:21px"></div>
<div class="t" style="top:658.94px;font-size:12px;color:#a6a6a6;left:798px;transform:scaleX(0.8961);transform-origin:left;">Detail</div>
<div class="t" style="top:681.84px;font-size:12px;color:#000;font-weight:bold;left:497px;">BOM Manufacture Expected WIP<span style="font-weight:normal">:</span></div>
<div class="inp" style="left:716px;top:679px;width:65px;height:22px;background:linear-gradient(#e9eaee,#fff 4px)"></div>
<div class="t" style="top:683.84px;font-size:12px;color:#000;right:222px;">0</div>
<div class="btn dis" style="left:791px;top:679.5px;width:39.5px;height:21px"></div>
<div class="t" style="top:682.94px;font-size:12px;color:#a6a6a6;left:798px;transform:scaleX(0.8961);transform-origin:left;">Detail</div>
<div class="inp" style="left:716px;top:703px;width:65px;height:22px;background:linear-gradient(#e9eaee,#fff 4px)"></div>
<div class="t" style="top:707.84px;font-size:12px;color:#000;right:222px;">0</div>
<div class="btn dis" style="left:791px;top:703.5px;width:39.5px;height:21px"></div>
<div class="t" style="top:706.94px;font-size:12px;color:#a6a6a6;left:798px;transform:scaleX(0.8961);transform-origin:left;">Detail</div>
<div class="a" style="left:272px;top:123px;width:132px;height:33px;border:3px solid #ee0000"></div>
</div>
</body>
</html>
